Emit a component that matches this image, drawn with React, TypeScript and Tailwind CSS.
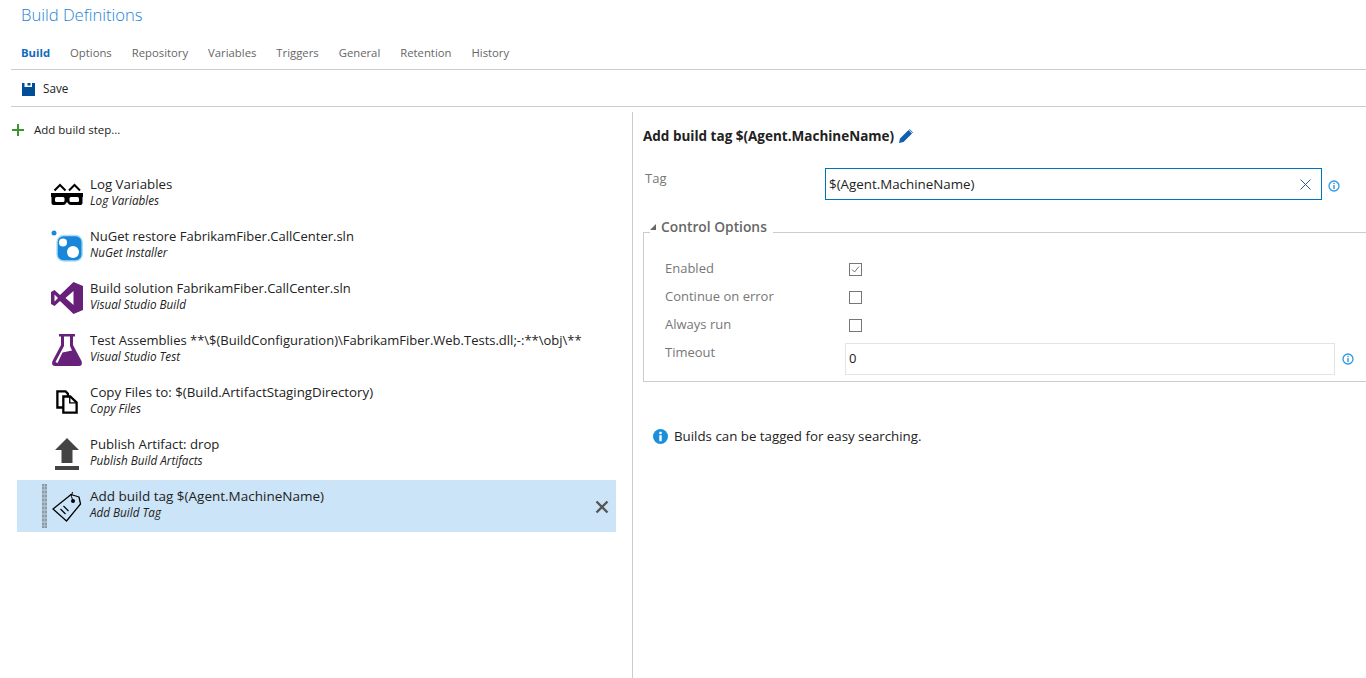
import React from 'react';

const GlassesIcon = () => (
  <svg width="32" height="22" viewBox="0 0 32 22">
    <path d="M3.500 7.500 9 2 14.500 7.500M18 7.500 23.500 2 29 7.500" fill="none" stroke="#000" strokeWidth="2" />
    <path d="M0 10H32V14H31.500V20Q31.500 22 29.500 22H20Q17.500 22 16.500 19.500H15.500Q14.500 22 12 22H2.500Q.5 22 .5 20V14H0Z" fill="#000" />
    <rect x="4" y="14" width="9.500" height="5" rx="1.500" fill="#fff" />
    <rect x="18.500" y="14" width="9.500" height="5" rx="1.500" fill="#fff" />
  </svg>
);

const NugetIcon = () => (
  <svg width="32" height="32" viewBox="0 0 32 32">
    <circle cx="3" cy="3" r="2.500" fill="#1e88d8" />
    <rect x="6" y="5.500" width="25.200" height="25.500" rx="6.500" fill="#1a86d9" stroke="#a8e0f6" strokeWidth="1.400" />
    <circle cx="12" cy="12.500" r="4" fill="#fff" />
    <circle cx="22" cy="22" r="6" fill="#fff" />
  </svg>
);

const VsIcon = () => (
  <svg width="32" height="32" viewBox="0 0 32 32">
    <path d="M22.500 0 32 4V28L22.500 32 9 19 3.500 24 0 22V10L3.500 8 9 13ZM22.500 9 14.500 16 22.500 23ZM3.500 12.500V19.500L7 16Z" fill="#68217a" fillRule="evenodd" />
  </svg>
);

const FlaskIcon = () => (
  <svg width="30" height="32" viewBox="0 0 30 32">
    <path d="M7 0H23V2.500H21V11L29.500 27Q31 32 27 32H3Q-1 32 .5 27L9 11V2.500H7ZM12 2.500V12L3.500 28 5.500 29 10.500 18.500 20 16.500 18 12V2.500Z" fill="#68217a" fillRule="evenodd" />
  </svg>
);

const CopyIcon = () => (
  <svg width="22" height="24" viewBox="0 0 24 26">
    <path d="M1.500 1.500H10.500L13 4V19H1.500Z" fill="#fff" stroke="#000" strokeWidth="2.500" />
    <path d="M8 7H15.500L22.500 13.500V24.500H8Z" fill="#fff" stroke="#000" strokeWidth="2.500" />
    <path d="M15 7.500V14H22" fill="none" stroke="#000" strokeWidth="1.500" />
  </svg>
);

const PublishIcon = () => (
  <svg width="24" height="32" viewBox="0 0 24 32">
    <path d="M12 0 24 12H17.500V25H6.500V12H0Z" fill="#444" />
    <rect y="28" width="24" height="4" fill="#444" />
  </svg>
);

const TagIcon = () => (
  <svg width="30" height="32" viewBox="0 0 30 32">
    <path d="M1 19 16 7 19 4.500 27 7 28.500 14 14.500 31Z" fill="none" stroke="#000" strokeWidth="1.300" strokeLinejoin="round" />
    <circle cx="21" cy="11" r="2" fill="#000" />
    <path d="M21 11Q18 6 20.500 2" fill="none" stroke="#000" />
    <path d="M11.500 16 16.500 21M8.500 19 13.500 24" fill="none" stroke="#000" strokeWidth="1.200" />
  </svg>
);

const SaveIcon = () => (
  <svg width="13" height="13" viewBox="0 0 13 13">
    <path d="M0 0H2.500V4H10V0H13V13H0Z" fill="#004e98" />
    <rect x="5.500" y="0" width="3" height="2.500" fill="#004e98" />
  </svg>
);

const PlusIcon = () => (
  <svg width="12" height="12" viewBox="0 0 12 12">
    <path d="M5 0H7V5H12V7H7V12H5V7H0V5H5Z" fill="#3d9431" />
  </svg>
);

const CloseBold = () => (
  <svg width="14" height="14" viewBox="0 0 14 14">
    <path d="M1.500 1.500 12.500 12.500M12.500 1.500 1.500 12.500" fill="none" stroke="#555" strokeWidth="2.400" />
  </svg>
);

const CloseThin = () => (
  <svg width="11" height="11" viewBox="0 0 11 11">
    <path d="M.5 .5 10.500 10.500M10.500 .5 .5 10.500" fill="none" stroke="#26588c" strokeWidth="1" />
  </svg>
);

const PencilIcon = () => (
  <svg width="14" height="14" viewBox="0 0 14 14">
    <path d="M0 14 1 9.500 9.500 1 13 4.500 4.500 13Z M10.500 0 14 3.500 13.500 4 10 .5Z" fill="#0f5fae" />
  </svg>
);

const InfoOutline = () => (
  <svg width="12" height="12" viewBox="0 0 12 12">
    <circle cx="6" cy="6" r="5" fill="none" stroke="#2a9be8" strokeWidth="1.300" />
    <rect x="5.400" y="2.800" width="1.200" height="1.300" fill="#1a7fd0" />
    <rect x="5.400" y="5" width="1.200" height="4" fill="#1a7fd0" />
  </svg>
);

const InfoSolid = () => (
  <svg width="15" height="15" viewBox="0 0 15 15">
    <circle cx="7.500" cy="7.500" r="7.500" fill="#1b8fdc" />
    <rect x="6.300" y="2.800" width="2.400" height="2.300" fill="#fff" />
    <rect x="6.300" y="6.200" width="2.400" height="6" fill="#fff" />
  </svg>
);

const tabs = ['Options', 'Repository', 'Variables', 'Triggers', 'General', 'Retention', 'History'];

const steps = [
  { title: 'Log Variables', sub: 'Log Variables', icon: <GlassesIcon />, size: 'text-[13.3px]' },
  { title: 'NuGet restore FabrikamFiber.CallCenter.sln', sub: 'NuGet Installer', icon: <NugetIcon />, size: 'text-[13px]' },
  { title: 'Build solution FabrikamFiber.CallCenter.sln', sub: 'Visual Studio Build', icon: <VsIcon />, size: 'text-[13px]' },
  { title: 'Test Assemblies **\\$(BuildConfiguration)\\FabrikamFiber.Web.Tests.dll;-:**\\obj\\**', sub: 'Visual Studio Test', icon: <FlaskIcon />, size: 'text-[13px]' },
  { title: 'Copy Files to: $(Build.ArtifactStagingDirectory)', sub: 'Copy Files', icon: <CopyIcon />, size: 'text-[13.3px]' },
  { title: 'Publish Artifact: drop', sub: 'Publish Build Artifacts', icon: <PublishIcon />, size: 'text-[13.2px]' },
  { title: 'Add build tag $(Agent.MachineName)', sub: 'Add Build Tag', icon: <TagIcon />, size: 'text-[13.5px]', selected: true },
];

const Checkbox = ({ checked }: { checked?: boolean }) => (
  <div className="w-[13px] h-[13px] border border-[#767676] flex items-center justify-center">
    {checked && (
      <svg width="9" height="9" viewBox="0 0 9 9">
        <path d="M1 4.500 3.500 7 8 1.500" fill="none" stroke="#777" />
      </svg>
    )}
  </div>
);

const StepRow = ({ step }: { step: (typeof steps)[number] }) => (
  <div className={`h-[52px] flex items-center ${step.selected ? 'bg-[#cce4f7]' : ''}`}>
    <div className="w-[25px] pl-[25px] shrink-0 flex">
      {step.selected && <div className="w-[5px] h-[44px] shrink-0 border-x-2 border-dotted border-[#8c9aa6] bg-[#a9bac8]" />}
    </div>
    <div className="w-[48px] h-[52px] pl-[2px] flex items-center justify-center shrink-0">{step.icon}</div>
    <div className="pb-[4px] whitespace-nowrap">
      <div className={`${step.size} leading-[17px] text-[#222]`}>{step.title}</div>
      <div className="text-[11.7px] leading-[15px] italic text-[#222]">{step.sub}</div>
    </div>
    {step.selected && (
      <div className="ml-auto pr-[7px] pt-[2px]">
        <CloseBold />
      </div>
    )}
  </div>
);

const OptionRow = ({ label, children }: { label: string; children: React.ReactNode }) => (
  <div className="h-[28px] flex items-start">
    <div className="w-[180px] text-[13px] leading-[16px] pt-[1px] text-[#777]">{label}</div>
    {children}
  </div>
);

export default function App() {
  return (
    <div className="h-[678px] w-[1366px] overflow-hidden flex flex-col bg-white font-['Open_Sans','Noto_Sans',sans-serif]">
      <div className="h-[30px] pl-[21px] pt-[3px] text-[16.6px] leading-[24px] font-light text-[#1b84d8]">Build Definitions</div>

      <div className="ml-[11px] h-[40px] pt-[14px] border-b border-[#cccccc] flex items-start pl-[10px] gap-[20px] text-[11.3px] leading-[17px] text-[#666]">
        <span className="font-bold text-[#0f6cbd]">Build</span>
        {tabs.map((t) => (
          <span key={t}>{t}</span>
        ))}
      </div>

      <div className="ml-[11px] h-[37px] pt-[2px] border-b border-[#cccccc] flex items-center pl-[11px] gap-[8px] text-[11.7px] text-[#222]">
        <SaveIcon />
        <span>Save</span>
      </div>

      <div className="flex-1 flex min-h-0">
        <div className="w-[632px] shrink-0">
          <div className="h-[61px] pt-[15px] pl-[12px] flex items-start gap-[10px] text-[11.5px] leading-[16px] text-[#222]">
            <div className="pt-[2px]"><PlusIcon /></div>
            <span>Add build step...</span>
          </div>
          <div className="ml-[17px] w-[599px]">
            {steps.map((s) => (
              <StepRow key={s.title} step={s} />
            ))}
          </div>
        </div>

        <div className="mt-[5px] flex-1 border-l border-[#cccccc] min-w-0">
          <div className="pl-[10px] pt-[15px] flex items-center gap-[5px] text-[13.5px] leading-[18px] font-bold text-[#222]">
            <span>Add build tag $(Agent.MachineName)</span>
            <PencilIcon />
          </div>

          <div className="mt-[23px] pl-[12px] flex items-start">
            <div className="w-[180px] text-[13px] leading-[16px] pt-[2px] text-[#777]">Tag</div>
            <div className="w-[497px] h-[32px] border border-[#0072c6] flex items-center justify-between pl-[3px] pt-[1px] pr-[10px] text-[13.35px] text-[#222]">
              <span>$(Agent.MachineName)</span>
              <CloseThin />
            </div>
            <div className="ml-[6px] mt-[12px]">
              <InfoOutline />
            </div>
          </div>

          <fieldset className="mt-[18px] ml-[10px] border border-[#cccccc] border-r-0 h-[164px]">
            <legend className="ml-[6px] pb-[10px] pr-[6px] flex items-center gap-[5px] text-[13.8px] leading-[18px] font-semibold text-[#666]">
              <span className="w-0 h-0 border-l-[6px] border-l-transparent border-b-[6px] border-b-[#666]" />
              <span>Control Options</span>
            </legend>
            <div className="pt-[13px] pl-[21px]">
              <OptionRow label="Enabled">
                <div className="mt-[4px] ml-[4px]"><Checkbox checked /></div>
              </OptionRow>
              <OptionRow label="Continue on error">
                <div className="mt-[4px] ml-[4px]"><Checkbox /></div>
              </OptionRow>
              <OptionRow label="Always run">
                <div className="mt-[4px] ml-[4px]"><Checkbox /></div>
              </OptionRow>
              <OptionRow label="Timeout">
                <div className="flex items-center">
                  <div className="w-[490px] h-[32px] border border-[#e4e4e4] flex items-center pl-[3px] text-[13px] text-[#222]">0</div>
                  <div className="ml-[7px]"><InfoOutline /></div>
                </div>
              </OptionRow>
            </div>
          </fieldset>

          <div className="mt-[45px] pl-[20px] flex items-center gap-[6px] text-[13.3px] leading-[18px] text-[#222]">
            <InfoSolid />
            <span>Builds can be tagged for easy searching.</span>
          </div>
        </div>
      </div>
    </div>
  );
}
